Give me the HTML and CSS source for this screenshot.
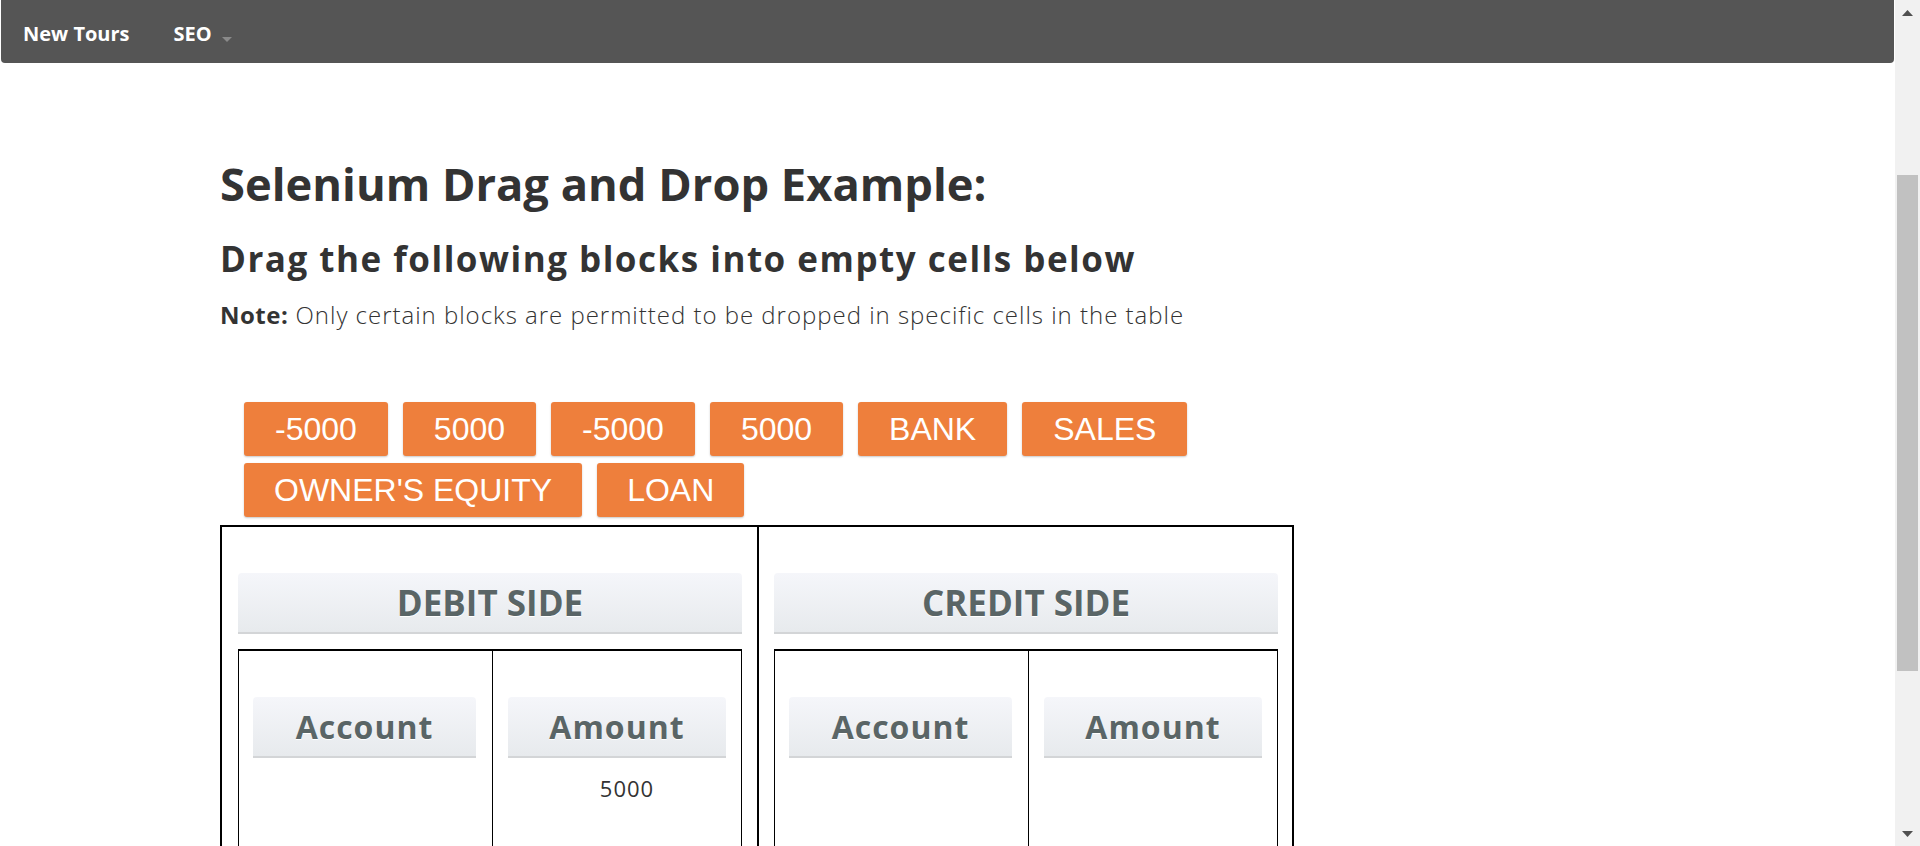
FILE: index.html
```html
<!DOCTYPE html>
<html lang="en">
<head>
<meta charset="utf-8">
<title>Selenium Drag and Drop Example</title>
<link rel="stylesheet" href="styles.css">
</head>
<body>
<nav class="topbar">
  <a class="nav-link" href="#">New Tours</a>
  <a class="nav-link" href="#">SEO<span class="caret"></span></a>
</nav>
<div class="scrollbar" aria-hidden="true">
  <span class="sb-arrow"><svg width="11" height="6" viewBox="0 0 11 6"><path d="M0 6 L5.5 0 L11 6 Z" fill="#505050"/></svg></span>
  <span class="sb-track"><span class="sb-thumb"></span></span>
  <span class="sb-arrow"><svg width="11" height="6" viewBox="0 0 11 6"><path d="M0 0 L5.5 6 L11 0 Z" fill="#505050"/></svg></span>
</div>
<main class="page">
  <h1 class="title">Selenium Drag and Drop Example:</h1>
  <h2 class="subtitle">Drag the following blocks into empty cells below</h2>
  <p class="note"><strong>Note:</strong> Only certain blocks are permitted to be dropped in specific cells in the table</p>
  <div class="blocks">
    <span class="block">-5000</span>
    <span class="block">5000</span>
    <span class="block">-5000</span>
    <span class="block">5000</span>
    <span class="block">BANK</span>
    <span class="block">SALES</span>
    <span class="block">OWNER'S EQUITY</span>
    <span class="block">LOAN</span>
  </div>
  <div class="board">
    <section class="side side-debit">
      <h3 class="side-head">DEBIT SIDE</h3>
      <div class="ledger">
        <div class="ledger-col ledger-col-first"><h4 class="col-head">Account</h4></div>
        <div class="ledger-col"><h4 class="col-head">Amount</h4><div class="entry">5000</div></div>
      </div>
    </section>
    <section class="side side-credit">
      <h3 class="side-head">CREDIT SIDE</h3>
      <div class="ledger">
        <div class="ledger-col ledger-col-first"><h4 class="col-head">Account</h4></div>
        <div class="ledger-col"><h4 class="col-head">Amount</h4></div>
      </div>
    </section>
  </div>
</main>
</body>
</html>
```
FILE: styles.css
```css
html { background: #fff; }
body {
  margin: 0;
  font-family: "Open Sans", "Liberation Sans", sans-serif;
  color: #333;
  background: #fff;
}

.topbar {
  position: fixed;
  top: 0;
  left: 1px;
  right: 26px;
  height: 63px;
  background: #555;
  border-radius: 0 0 4px 4px;
  display: flex;
  z-index: 10;
}
.nav-link {
  color: #fff;
  font-weight: 700;
  font-size: 20px;
  line-height: 58px;
  padding: 5px 22px 0;
  text-decoration: none;
  white-space: nowrap;
}
.caret {
  display: inline-block;
  width: 0;
  height: 0;
  margin-left: 10px;
  border-left: 5.5px solid transparent;
  border-right: 5.5px solid transparent;
  border-top: 5px solid #8a8a8a;
  vertical-align: -1px;
}

.scrollbar {
  position: fixed;
  top: 0;
  right: 0;
  bottom: 0;
  width: 25px;
  background: #f1f1f1;
  display: flex;
  flex-direction: column;
  z-index: 20;
}
.sb-arrow {
  height: 25px;
  display: flex;
  align-items: center;
  justify-content: center;
  flex: none;
}
.sb-arrow svg { display: block; }
.sb-track {
  flex: 1;
  padding: 150px 2px 0;
}
.sb-thumb {
  display: block;
  height: 496px;
  background: #c1c1c1;
}

.page {
  padding: 158px 0 0 220px;
}
.title {
  margin: 0;
  font-size: 45.3px;
  line-height: 52px;
  font-weight: 700;
}
.subtitle {
  margin: 29px 0 0;
  font-size: 35px;
  line-height: 40px;
  font-weight: 700;
  letter-spacing: 1.5px;
}
.note {
  margin: 21px 0 0;
  font-size: 24px;
  line-height: 30px;
  font-weight: 300;
  letter-spacing: 0.98px;
}
.note strong { font-weight: 700; letter-spacing: 0.5px; }

.blocks {
  margin-top: 72px;
  padding-left: 24px;
  width: 1050px;
  display: flex;
  flex-wrap: wrap;
  column-gap: 15px;
  row-gap: 7px;
}
.block {
  height: 54px;
  padding: 0 31px;
  box-sizing: border-box;
  background: #ee7f3c;
  color: #fff;
  font-family: "Liberation Sans", Arial, sans-serif;
  font-size: 32px;
  line-height: 54px;
  border-radius: 3px;
  box-shadow: 0 1px 2px rgba(0, 0, 0, 0.22);
  white-space: nowrap;
}
.block:nth-child(7),
.block:nth-child(8) { padding: 0 30px; }

.board {
  margin-top: 8px;
  width: 1074px;
  box-sizing: border-box;
  border: 2px solid #000;
  display: grid;
  grid-template-columns: 537px 1fr;
}
.side {
  padding: 46px 15px 0 15px;
}
.side-debit {
  padding-left: 16px;
  border-right: 2px solid #000;
}
.side-credit { padding-right: 14px; }
.side-head,
.col-head {
  margin: 0;
  height: 59px;
  line-height: 59px;
  text-align: center;
  font-weight: 700;
  color: #5a6566;
  background: linear-gradient(to bottom, #f5f6fa, #e7eaed);
  border-bottom: 2px solid #d3d5d7;
  border-radius: 4px 4px 0 0;
  text-shadow: 0 1px 0 #fff;
}
.side-head { font-size: 35px; }
.col-head { font-size: 32px; letter-spacing: 1px; }

.ledger {
  margin-top: 15px;
  border: 1px solid #000;
  border-top-width: 2px;
  display: grid;
  grid-template-columns: 254px 1fr;
}
.ledger-col {
  padding: 46px 15px 0;
  min-height: 420px;
}
.ledger-col-first {
  padding-left: 14px;
  padding-right: 16px;
  border-right: 1px solid #000;
}
.entry {
  margin-top: 15px;
  padding-left: 20px;
  text-align: center;
  font-size: 22px;
  line-height: 30px;
  letter-spacing: 1px;
  color: #333;
}
```
